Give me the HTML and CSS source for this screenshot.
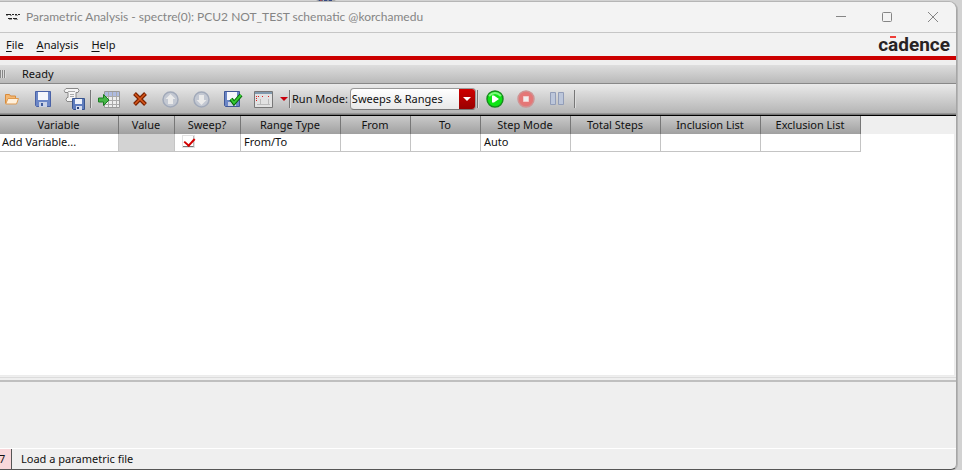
FILE: index.html
```html
<!DOCTYPE html>
<html lang="en">
<head>
<meta charset="utf-8">
<title>Parametric Analysis</title>
<link rel="stylesheet" href="styles.css">
</head>
<body>
<div class="behind"><svg width="28" height="3" viewBox="0 0 28 3"><path fill="#aaa" d="M0 0h28v3H0z"/><path fill="#354a83" d="M3 0h6v3H3zM11 0h5v3h-5zM18 0h5v2h-5z"/><path fill="#b04a45" d="M5 0h3v1H5z"/></svg></div>
<main class="window">
  <header class="titlebar">
    <svg class="app-icon" width="14" height="8" viewBox="0 0 14 8"><path d="M0 1.500h5m1 0h2m1 0h2m1 0h2M2 5.500h4m1 0h4" stroke="#222" fill="none"/><path d="M0 2.500h2m2 0h2m3 0h3M3 6.500h3m2 0h4" stroke="#999" fill="none"/></svg>
    <h1>Parametric Analysis - spectre(0): PCU2 NOT_TEST schematic @korchamedu</h1>
    <div class="window-buttons">
      <button type="button" aria-label="Minimize"><svg width="12" height="12" viewBox="0 0 12 12"><path d="M1 5.500h10"/></svg></button>
      <button type="button" aria-label="Maximize"><svg width="12" height="12" viewBox="0 0 12 12"><rect x="1.500" y="1.500" width="9" height="9" rx="1"/></svg></button>
      <button type="button" aria-label="Close"><svg width="12" height="12" viewBox="0 0 12 12"><path d="M1 1l10 10M11 1L1 11"/></svg></button>
    </div>
  </header>
  <nav class="menubar">
    <button type="button"><u>F</u>ile</button>
    <button type="button"><u>A</u>nalysis</button>
    <button type="button"><u>H</u>elp</button>
    <span class="brand">c<span class="macron">a</span>dence</span>
  </nav>
  <div class="state"><span class="grip"></span>Ready</div>
  <div class="toolbar">
    <div class="tools">
      <button type="button" aria-label="Open"><svg width="14" height="14" viewBox="0 0 14 14"><path d="M.5 11.500v-9h4l1 1.500h5v3" fill="#f4b873" stroke="#d88b3c"/><path d="M3 6.500h10.500l-2 5.500H.7z" fill="#fff0dc" stroke="#dd9a50"/></svg></button>
      <button type="button" aria-label="Save"><svg width="16" height="16" viewBox="0 0 16 16"><path d="M.5.5h15v15h-14l-1-1z" fill="#6b86c6" stroke="#4a62a6"/><path d="M3 1h10v8H3z" fill="#f5f7fc"/><path d="M4 11h8v5H4z" fill="#c9d1e6"/><path d="M6 12h2v3H6z" fill="#405c9c"/></svg></button>
      <button type="button" aria-label="Save script"><svg width="22" height="22" viewBox="0 0 22 22"><path d="M3 .5h12q2 2 0 4h-2v6l2 3H4q-2-2 0-4h1v-5H2q-2-2 1-4z" fill="#f5f5f5" stroke="#888"/><path d="M5 3.500h7M7 6.500h4M7 8.500h4" stroke="#aaa"/><path d="M9.500 10.500h12v11h-11l-1-1z" fill="#5f7dbe" stroke="#38548f"/><path d="M12 11h7v5h-7z" fill="#eef2fa"/><path d="M13 18h6v4h-6z" fill="#d5dced"/><path d="M14 19h2v2h-2z" fill="#263f78"/></svg></button>
    </div>
    <span class="rule"></span>
    <div class="tools">
      <button type="button" aria-label="Import table"><svg width="22" height="17" viewBox="0 0 22 17"><path d="M6.500.5h15v16h-15z" fill="#eee" stroke="#999"/><path d="M7 1h14v4H7z" fill="#aebbe0"/><path d="M7 5.500h14M7 9.500h14M7 13.500h14M10.500 1v15M14.500 1v15M18.500 1v15" stroke="#aaa"/><path d="M.5 7h5V3.500l5.500 5.500-5.500 5.500V11h-5z" fill="#47b647" stroke="#197c20"/></svg></button>
      <button type="button" aria-label="Delete"><svg width="14" height="14" viewBox="0 0 14 14"><path d="M1.500 1.500l11 11M12.500 1.500l-11 11" stroke="#7c2200" stroke-width="4"/><path d="M2 2l10 10M12 2L2 12" stroke="#d9591c" stroke-width="1.500"/></svg></button>
      <button type="button" aria-label="Move up" disabled><svg width="17" height="17" viewBox="0 0 17 17"><circle cx="8.500" cy="8.500" r="7.500" fill="#c3c8d2" stroke="#a1a9b9" stroke-width="1.500"/><path d="M8.500 3l5 5H11v5H6V8H3.500z" fill="#eaeaea"/></svg></button>
      <button type="button" aria-label="Move down" disabled><svg width="17" height="17" viewBox="0 0 17 17"><circle cx="8.500" cy="8.500" r="7.500" fill="#c3c8d2" stroke="#a1a9b9" stroke-width="1.500"/><path d="M8.500 14l5-5H11V4H6v5H3.500z" fill="#eaeaea"/></svg></button>
      <button type="button" aria-label="Save and check"><svg width="20" height="16" viewBox="0 0 20 16"><path d="M1.500.5h15v15h-14l-1-1z" fill="#6b86c6" stroke="#3f5796"/><path d="M4 1h10v8H4z" fill="#f5f7fc"/><path d="M5 11h8v4H5z" fill="#c9d1e6"/><path d="M8 8l3 4 7-8" stroke="#086808" stroke-width="4" fill="none"/><path d="M8 8l3 4 7-8" stroke="#34c934" stroke-width="2" fill="none"/></svg></button>
      <button type="button" aria-label="Plot"><svg width="19" height="17" viewBox="0 0 19 17"><path d="M.5.5h18v16H.5z" fill="#e2e2e2" stroke="#777"/><path d="M1 1h17v2H1z" fill="#819aae"/><path d="M6.500 8v5M14.500 8v5M3 13.500h13" stroke="#bbb"/><path d="M2 5h1v1H2zM2 7h1v1H2zM2 9h1v1H2zM4 5h1v1H4zM8 5h1v1H8zM14 5h1v1h-1z" fill="#d22"/></svg></button>
    </div>
    <button class="drop" type="button" aria-label="Plot options"><svg width="8" height="4" viewBox="0 0 8 4"><path d="M0 0h8L4 4z" fill="#c8000c"/></svg></button>
    <span class="rule tight"></span>
    <label for="mode">Run Mode:</label>
    <div class="select">
      <select id="mode"><option>Sweeps &amp; Ranges</option></select>
      <span class="arrow"><svg width="8" height="5" viewBox="0 0 8 5"><path d="M0 0h8L4 4z" fill="#fff"/></svg></span>
    </div>
    <span class="rule tight"></span>
    <div class="tools run">
      <button type="button" aria-label="Run"><svg width="18" height="18" viewBox="0 0 18 18"><circle cx="9" cy="9" r="8" fill="#0de514" stroke="#168b1c" stroke-width="1.500"/><path d="M3 6q6-6 12 0" stroke="#7dfa7d" stroke-width="2" fill="none"/><path d="M6 5.500h2l5 3.500-5 3.500H6z" fill="#fff"/></svg></button>
      <button type="button" aria-label="Stop" disabled><svg width="18" height="18" viewBox="0 0 18 18"><circle cx="9" cy="9" r="8" fill="#e47777" stroke="#cf9393" stroke-width="1.500"/><path d="M6.500 6.500h5v5h-5z" fill="#eee" stroke="#f5caca"/></svg></button>
      <button type="button" aria-label="Pause" disabled><svg width="15" height="14" viewBox="0 0 15 14"><path d="M.5.5h5v12h-5zM8.500.5h5v12h-5z" fill="#bcc6da" stroke="#929db8"/></svg></button>
    </div>
    <span class="rule"></span>
  </div>
  <section class="sheet">
    <table>
      <colgroup><col class="c-variable"><col class="c-value"><col class="c-sweep"><col class="c-range"><col class="c-bound"><col class="c-bound"><col class="c-step"><col class="c-step"><col class="c-range"><col class="c-range"></colgroup>
      <thead><tr><th>Variable</th><th>Value</th><th>Sweep?</th><th>Range Type</th><th>From</th><th>To</th><th>Step Mode</th><th>Total Steps</th><th>Inclusion List</th><th>Exclusion List</th></tr></thead>
      <tbody><tr><td>Add Variable...</td><td class="off"></td><td class="tick"><input type="checkbox" checked aria-label="Sweep"></td><td>From/To</td><td></td><td></td><td>Auto</td><td></td><td></td><td></td></tr></tbody>
    </table>
  </section>
  <section class="output"></section>
  <footer class="status"><span class="count">7</span><span>Load a parametric file</span></footer>
</main>
</body>
</html>
```
FILE: styles.css
```css
* { box-sizing: border-box; }
body {
  margin: 0;
  height: 100vh;
  display: flex;
  flex-direction: column;
  padding: 2px 5px 0 0;
  background: #d2d2d2;
  color: #111;
  font: 11px/16px "Noto Sans", "Open Sans", sans-serif;
  overflow: hidden;
}
button, select, input { font: inherit; color: inherit; margin: 0; }
button { padding: 0; border: 0; background: none; }
svg { display: block; }
.behind { position: absolute; top: 0; left: 312px; }
.behind svg { height: 2px; }
.window {
  flex: 1;
  min-height: 0;
  display: flex;
  flex-direction: column;
  background: #efefef;
  border: 1px solid #a6a6a6;
  border-left: 0;
  border-top: 0;
  border-bottom-color: #555;
  border-radius: 0 8px 6px 0;
  box-shadow: 0 0 0 1px #b5b5b5;
  overflow: hidden;
  position: relative;
}
.titlebar {
  flex: 0 0 31px;
  display: flex;
  align-items: center;
  gap: 6px;
  padding-left: 6px;
  background: #f3f3f3;
  border-bottom: 1px solid #c6c6c6;
}
.titlebar h1 {
  flex: 1;
  margin: 0;
  font: 400 12px/16px Lato, sans-serif;
  color: #858585;
}
.window-buttons { display: flex; }
.window-buttons button { width: 46px; display: grid; place-items: center; }
.window-buttons svg { fill: none; stroke: #858585; }
.menubar {
  flex: 0 0 27px;
  display: flex;
  align-items: center;
  gap: 13px;
  padding: 0 6px;
  background: #f2f2f2;
  border-bottom: 4px solid #cc0000;
}
.menubar u { text-underline-offset: 2px; }
.brand {
  margin-left: auto;
  font: 700 19px/22px Roboto, sans-serif;
  color: #282324;
}
.macron { position: relative; }
.macron::before {
  content: "";
  position: absolute;
  top: 3px;
  left: 2px;
  width: 6px;
  height: 2px;
  background: #ef3d38;
}
.state {
  flex: 0 0 24px;
  display: flex;
  align-items: center;
  gap: 16px;
  padding-top: 5px;
  background: linear-gradient(#efefef 5px, #dedede 5px, #b9b9b9);
  border-bottom: 1px solid #888;
}
.grip {
  width: 6px;
  height: 8px;
  background: repeating-linear-gradient(90deg, #888 0 1px, #ddd 1px 2px);
}
.toolbar {
  flex: 0 0 32px;
  display: flex;
  align-items: center;
  padding-bottom: 1px;
  background: linear-gradient(#eaeaea, #b5b5b5 29px, #777 30px);
  border-bottom: 1px solid #000;
}
.tools { display: flex; gap: 8px; }
.tools button { width: 23px; height: 24px; display: grid; place-items: center; }
.run { margin-left: 4px; }
.rule { width: 2px; height: 18px; margin: 0 5px; border-left: 1px solid #777; border-right: 1px solid #ddd; }
.tight { margin: 0 1px; }
.drop { margin-left: 5px; }
.select {
  display: flex;
  width: 126px;
  height: 22px;
  margin-left: 2px;
  border: 1px solid #999;
  border-bottom-color: #777;
  border-radius: 4px;
  background: linear-gradient(#fff, #e8e8e8);
  overflow: hidden;
  position: relative;
}
select { appearance: none; flex: 1; padding: 0 18px 0 1px; border: 0; background: none; }
.arrow {
  position: absolute;
  top: 0;
  right: 0;
  bottom: 0;
  width: 16px;
  display: grid;
  place-items: center;
  background: linear-gradient(#cf0000, #980000);
  pointer-events: none;
}
.sheet {
  flex: 1;
  min-height: 0;
  margin-right: 1px;
  background: linear-gradient(#efefef 18px, #fff 18px);
  border-right: 1px solid #ececec;
  border-bottom: 1px solid #ececec;
}
table { table-layout: fixed; border-collapse: separate; border-spacing: 0; width: 861px; }
.c-variable { width: 119px; }
.c-value { width: 56px; }
.c-sweep { width: 66px; }
.c-range { width: 100px; }
.c-bound { width: 70px; }
.c-step { width: 90px; }
th, td { padding: 0 4px 0 3px; line-height: 16px; font-weight: 400; border-right: 1px solid #c4c4c4; }
th { height: 18px; background: linear-gradient(#cacaca, #a0a0a0); border-right-color: #777; }
td { height: 18px; padding-bottom: 2px; line-height: 15px; background: #fff; border-bottom: 1px solid #c4c4c4; }
td:first-child { padding-left: 2px; }
td.off { background: #d3d3d3; }
td.tick { padding-left: 8px; }
input[type="checkbox"] {
  appearance: none;
  display: block;
  width: 11px;
  height: 11px;
  background: #fff;
  border-right: 1px solid #bbb;
  border-bottom: 1px solid #777;
  box-shadow: 0 0 0 1px #e2e2e2;
}
input[type="checkbox"]::before {
  content: "";
  display: block;
  width: 5px;
  height: 8px;
  margin: 0 0 0 3px;
  border: solid #d40000;
  border-width: 0 2px 2px 0;
  transform: rotate(42deg);
}
.output {
  flex: 0 0 73px;
  background: linear-gradient(#efefef 1px, #dcdcdc 1px 2px, #efefef 2px 4px, #bfbfbf 4px 6px, #efefef 6px);
  border-bottom: 1px solid #fff;
}
.status { flex: 0 0 20px; display: flex; align-items: stretch; gap: 9px; line-height: 20px; }
.count {
  width: 12px;
  text-indent: -1px;
  background: #f8d7da;
  border-right: 1px solid #555;
}
```
